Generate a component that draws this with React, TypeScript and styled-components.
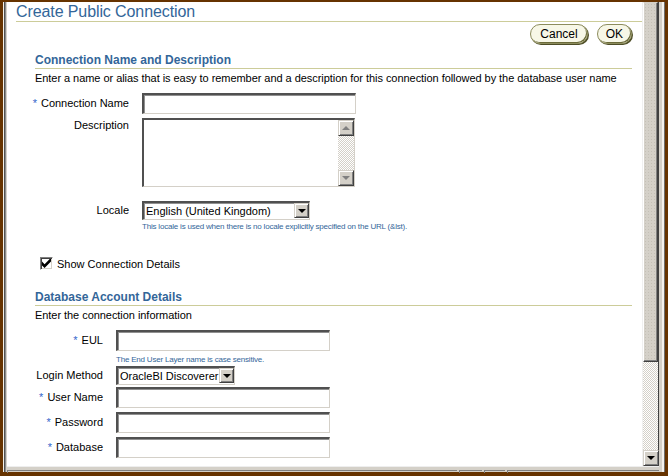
import React from 'react';
import styled, { createGlobalStyle } from 'styled-components';

const BROWN = '#663300';
const FACE = '#d4d0c8';
const BLUE = '#336699';
const RULE = '#cccc99';

const GlobalStyle = createGlobalStyle`
  html, body {
    margin: 0;
    padding: 0;
    background: ${BROWN};
  }
  body {
    font-family: 'Liberation Sans', Arial, sans-serif;
    color: #000;
  }
  * {
    box-sizing: border-box;
  }
`;

const Screen = styled.div`
  display: flex;
  height: 476px;
  padding: 2px 3px 4px 3px;
  background: ${BROWN};
`;

const Window = styled.div`
  flex: 1;
  display: flex;
  flex-direction: column;
  min-width: 0;
  padding: 0 6px 0 4px;
  background: ${FACE};
  box-shadow:
    inset 1px 0 #f2f0ea,
    inset 2px 0 #505050,
    inset 3px 0 #8a8a8a,
    inset -1px 0 #707070,
    inset -3px 0 #f4f2ee;
`;

const Viewport = styled.div`
  flex: 1;
  display: flex;
  min-height: 0;
`;

const Content = styled.div`
  flex: 1;
  min-width: 0;
  overflow: hidden;
  background: #fff;
  border-right: 1px solid #f0f0f0;
`;

const StatusStrip = styled.div`
  height: 6px;
  display: flex;
  gap: 2px;
  padding-top: 3px;
  border-top: 1px solid #eeeeee;

  span {
    height: 3px;
    border-top: 1px solid #808080;
    border-left: 1px solid #808080;
  }
`;

/* page scrollbar */
const VScroll = styled.div`
  width: 16px;
  display: flex;
  flex-direction: column;
  border-right: 1px solid #404040;
`;

const Thumb = styled.div`
  height: 360px;
  background-color: ${FACE};
  background-image: radial-gradient(#c4c0b6 0.6px, transparent 0.7px);
  background-size: 3px 3px;
  border-top: 1px solid ${FACE};
  border-left: 1px solid #fff;
  border-right: 1px solid #404040;
  border-bottom: 1px solid #404040;
  box-shadow: inset -1px -1px #808080;
`;

const Track = styled.div`
  flex: 1;
  background: repeating-conic-gradient(${FACE} 0 25%, #fff 0 50%) 0 0 / 2px 2px;
`;

const ArrowButton = styled.div<{ $size?: number }>`
  width: ${({ $size }) => $size ?? 16}px;
  height: ${({ $size }) => $size ?? 16}px;
  display: flex;
  align-items: center;
  justify-content: center;
  flex: none;
  background: ${FACE};
  border-top: 1px solid ${FACE};
  border-left: 1px solid ${FACE};
  border-right: 1px solid #404040;
  border-bottom: 1px solid #404040;
  box-shadow: inset 1px 1px #fff, inset -1px -1px #808080;
`;

const Triangle = styled.span<{ $up?: boolean; $muted?: boolean }>`
  width: 0;
  height: 0;
  border-left: 4px solid transparent;
  border-right: 4px solid transparent;
  ${({ $up, $muted }) =>
    $up
      ? `border-bottom: 4px solid ${$muted ? '#808080' : '#000'};`
      : `border-top: 4px solid ${$muted ? '#808080' : '#000'};`}
`;

/* page content */
const PageTitle = styled.h1`
  margin: 0 0 0 9px;
  padding: 0;
  font-size: 16px;
  line-height: 19px;
  letter-spacing: -0.1px;
  font-weight: normal;
  color: ${BLUE};
  border-bottom: 1px solid ${RULE};
`;

const ButtonBar = styled.div`
  display: flex;
  justify-content: flex-end;
  gap: 9px;
  margin: 2px 10px 0 0;
`;

const PillButton = styled.button<{ $pad: number }>`
  height: 20px;
  padding: 0 ${({ $pad }) => $pad}px;
  border-radius: 10px;
  border: 1px solid #8c8c5c;
  background: #f7f7e7;
  box-shadow: inset -1px -1px #6b6b3a, 1px 1px #4d4d26;
  font-family: 'Liberation Sans', Arial, sans-serif;
  font-size: 12px;
  color: #000;
  cursor: pointer;
`;

const Section = styled.section<{ $top: number }>`
  margin: ${({ $top }) => $top}px 10px 0 28px;
`;

const SectionTitle = styled.h2`
  margin: 0;
  font-size: 12px;
  line-height: 15px;
  font-weight: bold;
  color: ${BLUE};
  border-bottom: 1px solid ${RULE};
`;

const Instruction = styled.p`
  margin: 2px 0 0;
  font-size: 11px;
  line-height: 14px;
  letter-spacing: -0.05px;
`;

const Form = styled.div<{ $label: number; $top: number }>`
  display: grid;
  grid-template-columns: ${({ $label }) => $label}px auto;
  column-gap: 13px;
  margin-top: ${({ $top }) => $top}px;
  align-items: start;
`;

const Label = styled.label<{ $h?: number }>`
  justify-self: end;
  font-size: 11px;
  line-height: ${({ $h }) => $h ?? 21}px;
  white-space: nowrap;
`;

const Star = styled.span`
  color: #3366cc;
  margin-right: 4px;
`;

const Field = styled.div<{ $gap?: number }>`
  margin-bottom: ${({ $gap }) => $gap ?? 4}px;
`;

const insetBorder = `
  border-style: solid;
  border-width: 2px 1px 1px 2px;
  border-color: #505050 #d4d0c8 #d4d0c8 #505050;
  box-shadow: inset 1px 1px #909090;
`;

const TextInput = styled.input<{ $w: number }>`
  display: block;
  width: ${({ $w }) => $w}px;
  height: 21px;
  margin: 0;
  padding: 0 3px;
  background: #fff;
  font-family: 'Liberation Sans', Arial, sans-serif;
  font-size: 12px;
  outline: none;
  ${insetBorder}
`;

const AreaBox = styled.div`
  display: flex;
  width: 213px;
  height: 69px;
  background: #fff;
  ${insetBorder}
`;

const AreaText = styled.textarea`
  flex: 1;
  border: 0;
  resize: none;
  outline: none;
  padding: 2px;
  font-family: 'Liberation Sans', Arial, sans-serif;
  font-size: 12px;
`;

const AreaScroll = styled.div`
  width: 16px;
  display: flex;
  flex-direction: column;
`;

const SelectBox = styled.div<{ $w: number }>`
  display: flex;
  align-items: stretch;
  width: ${({ $w }) => $w}px;
  height: 19px;
  background: #fff;
  ${insetBorder}
`;

const SelectText = styled.span`
  flex: 1;
  min-width: 0;
  overflow: hidden;
  white-space: nowrap;
  padding-left: 2px;
  font-size: 11px;
  line-height: 16px;
`;

const Hint = styled.div<{ $top?: number }>`
  margin-top: ${({ $top }) => $top ?? 2}px;
  font-size: 8px;
  line-height: 10px;
  letter-spacing: -0.2px;
  color: ${BLUE};
  white-space: nowrap;
`;

const CheckRow = styled.label`
  display: flex;
  align-items: center;
  gap: 4px;
  margin: 25px 0 0 5px;
  font-size: 11px;
`;

const CheckBox = styled.span`
  width: 13px;
  height: 13px;
  display: flex;
  align-items: center;
  justify-content: center;
  background: #fff;
  border-style: solid;
  border-width: 1px;
  border-color: #808080 #fff #fff #808080;
  box-shadow: inset 1px 1px #404040, inset -1px -1px ${FACE};
`;

function Required({ children }: { children: React.ReactNode }) {
  return (
    <>
      <Star>*</Star>
      {children}
    </>
  );
}

function Select({ value, width }: { value: string; width: number }) {
  return (
    <SelectBox $w={width}>
      <SelectText>{value}</SelectText>
      <ArrowButton $size={15}>
        <Triangle />
      </ArrowButton>
    </SelectBox>
  );
}

export default function App() {
  return (
    <>
      <GlobalStyle />
      <Screen>
        <Window>
          <Viewport>
            <Content>
              <PageTitle>Create Public Connection</PageTitle>
              <ButtonBar>
                <PillButton $pad={9}>Cancel</PillButton>
                <PillButton $pad={8}>OK</PillButton>
              </ButtonBar>

              <Section $top={9}>
                <SectionTitle>Connection Name and Description</SectionTitle>
                <Instruction>
                  Enter a name or alias that is easy to remember and a description for this
                  connection followed by the database user name
                </Instruction>
                <Form $label={94} $top={8}>
                  <Label>
                    <Required>Connection Name</Required>
                  </Label>
                  <Field>
                    <TextInput $w={214} />
                  </Field>
                  <Label $h={14}>Description</Label>
                  <Field $gap={14}>
                    <AreaBox>
                      <AreaText />
                      <AreaScroll>
                        <ArrowButton>
                          <Triangle $up $muted />
                        </ArrowButton>
                        <Track />
                        <ArrowButton>
                          <Triangle $muted />
                        </ArrowButton>
                      </AreaScroll>
                    </AreaBox>
                  </Field>
                  <Label $h={19}>Locale</Label>
                  <Field $gap={0}>
                    <Select value="English (United Kingdom)" width={168} />
                    <Hint>
                      This locale is used when there is no locale explicitly specified on the URL
                      (&amp;lst).
                    </Hint>
                  </Field>
                </Form>
                <CheckRow>
                  <CheckBox>
                    <svg width="9" height="9" viewBox="0 0 7 7">
                      <path d="M0 2v3l2 2 5-5V-1L2 4z" fill="#000" />
                    </svg>
                  </CheckBox>
                  Show Connection Details
                </CheckRow>
              </Section>

              <Section $top={20}>
                <SectionTitle>Database Account Details</SectionTitle>
                <Instruction>Enter the connection information</Instruction>
                <Form $label={68} $top={8}>
                  <Label>
                    <Required>EUL</Required>
                  </Label>
                  <Field $gap={1}>
                    <TextInput $w={214} />
                    <Hint $top={4}>The End User Layer name is case sensitive.</Hint>
                  </Field>
                  <Label $h={19}>Login Method</Label>
                  <Field $gap={2}>
                    <Select value="OracleBI Discoverer" width={119} />
                  </Field>
                  <Label>
                    <Required>User Name</Required>
                  </Label>
                  <Field>
                    <TextInput $w={214} />
                  </Field>
                  <Label>
                    <Required>Password</Required>
                  </Label>
                  <Field>
                    <TextInput $w={214} type="password" />
                  </Field>
                  <Label>
                    <Required>Database</Required>
                  </Label>
                  <Field>
                    <TextInput $w={214} />
                  </Field>
                </Form>
              </Section>
            </Content>
            <VScroll>
              <Thumb />
              <Track />
              <ArrowButton>
                <Triangle />
              </ArrowButton>
            </VScroll>
          </Viewport>
          <StatusStrip>
            <span style={{ width: 450 }} />
            <span style={{ width: 23 }} />
            <span style={{ width: 21 }} />
            <span style={{ flex: 1 }} />
          </StatusStrip>
        </Window>
      </Screen>
    </>
  );
}
